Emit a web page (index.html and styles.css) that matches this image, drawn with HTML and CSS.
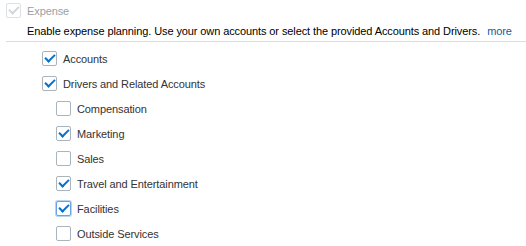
FILE: index.html
```html
<!DOCTYPE html>
<html lang="en">
<head>
    <meta charset="UTF-8">
    <title>Expense</title>
    <link rel="stylesheet" href="styles.css">
</head>
<body>
    <div class="feature">
        <label class="row head disabled">
            <span class="box checked"></span>
            <span>Expense</span>
        </label>
        <p class="desc">Enable expense planning. Use your own accounts or select the provided Accounts and Drivers.<a href="#" class="more">more</a></p>
    </div>

    <ul class="options">
        <li class="row"><span class="box checked"></span>Accounts</li>
        <li class="row"><span class="box checked"></span>Drivers and Related Accounts</li>
        <li>
            <ul class="drivers">
                <li class="row"><span class="box"></span>Compensation</li>
                <li class="row"><span class="box checked"></span>Marketing</li>
                <li class="row"><span class="box"></span>Sales</li>
                <li class="row"><span class="box checked"></span>Travel and Entertainment</li>
                <li class="row"><span class="box checked focus"></span>Facilities</li>
                <li class="row"><span class="box"></span>Outside Services</li>
            </ul>
        </li>
    </ul>
</body>
</html>
```

FILE: styles.css
```css
body {
    font-family: 'Liberation Sans', Arial, sans-serif;
    font-size: 11px;
    letter-spacing: -0.1px;
    color: #333;
    margin: 0;
    padding: 3px 0 0 6px;
    background: #fff;
}

ul {
    list-style: none;
    margin: 0;
    padding: 0;
}

.row {
    display: flex;
    align-items: center;
    gap: 6px;
    height: 25px;
}

.head {
    height: 15px;
    color: #9a9fa4;
}

.desc {
    margin: 6px 0 0 21px;
    color: #000;
    line-height: 14px;
    white-space: nowrap;
}

.more {
    color: #145c9e;
    text-decoration: none;
    margin-left: 7px;
}

.feature {
    border-bottom: 1px solid #d6dfe6;
    padding-bottom: 3px;
}

.options {
    padding: 4px 0 0 36px;
}

.drivers {
    padding-left: 14px;
}

.box {
    width: 13px;
    height: 13px;
    border: 1px solid #aab4bd;
    border-radius: 2px;
    background: #fff;
    position: relative;
    flex: none;
}

.box.checked::after {
    content: '';
    position: absolute;
    left: 4px;
    top: 0px;
    width: 4px;
    height: 8px;
    border: solid #0572ce;
    border-width: 0 2px 2px 0;
    transform: rotate(45deg);
}

.disabled .box {
    border-color: #dde1e4;
}

.disabled .box.checked::after {
    border-color: #d3d7da;
}

.box.focus {
    border-color: #6aa3e0;
    box-shadow: 0 0 0 1px #b9d4f2;
}
```
